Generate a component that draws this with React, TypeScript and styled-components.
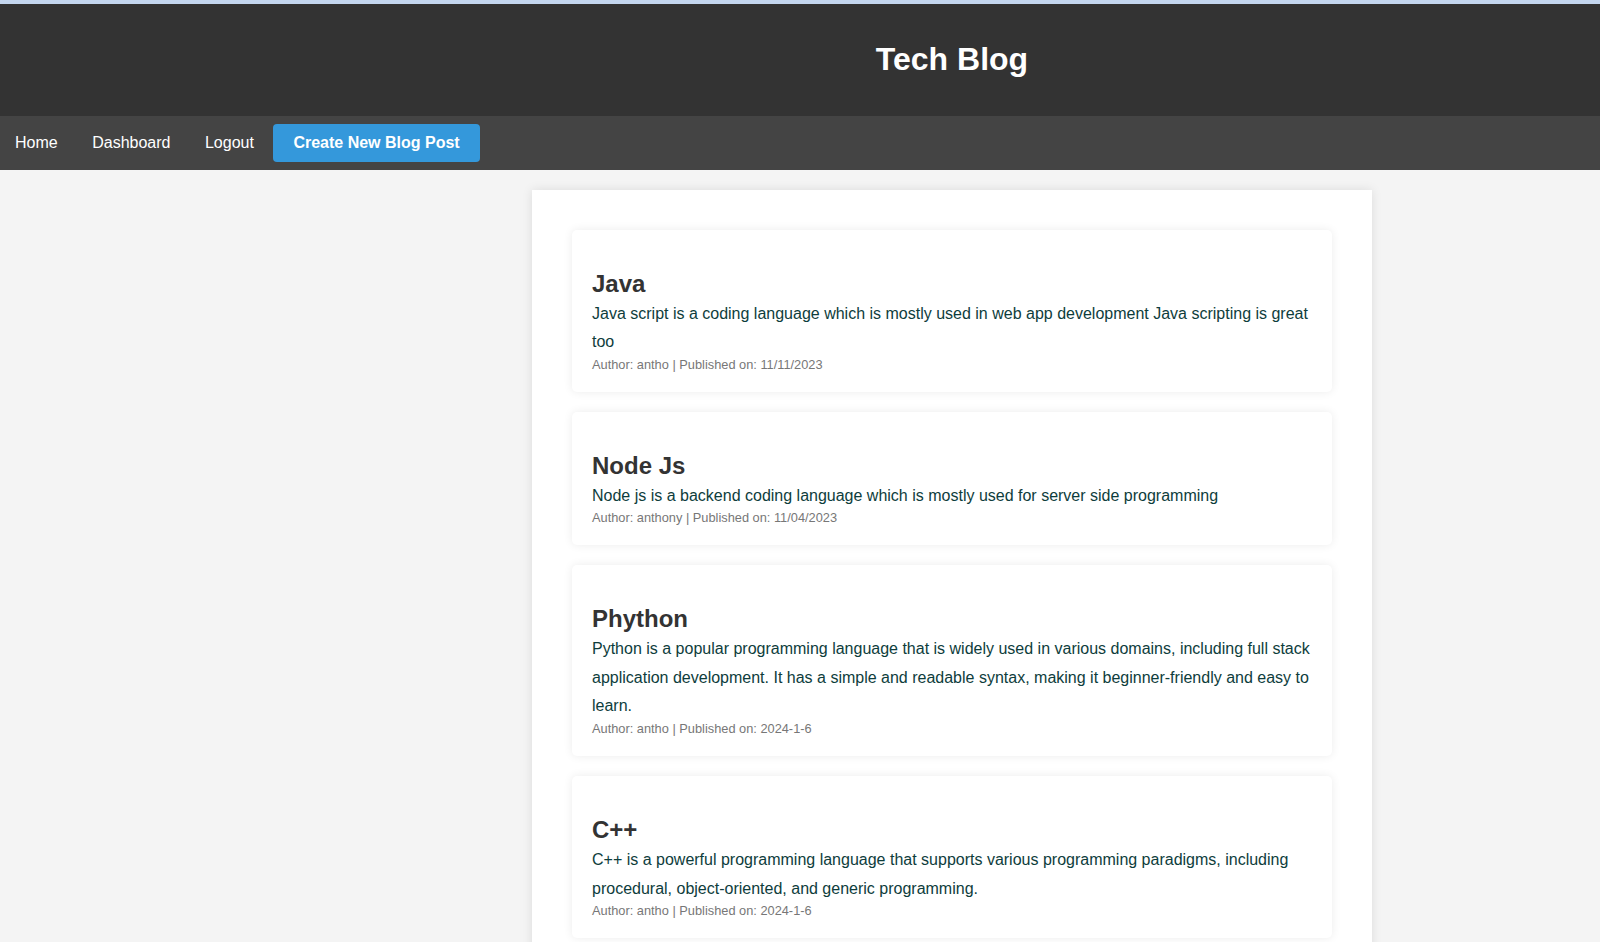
import React from "react";
import styled, { createGlobalStyle } from "styled-components";

const GlobalStyle = createGlobalStyle`
  html, body {
    margin: 0;
    padding: 0;
    background: #f4f4f4;
    font-family: "Liberation Sans", Arial, Helvetica, sans-serif;
  }
  * { box-sizing: border-box; }
`;

const Page = styled.div`
  min-height: 942px;
  border-top: 4px solid #c4d6ef;
`;

const Header = styled.header`
  background: #333333;
  height: 112px;
  display: flex;
  align-items: center;
  justify-content: center;
  padding-left: 304px;
  padding-bottom: 1px;
`;

const Title = styled.h1`
  margin: 0;
  color: #ffffff;
  font-size: 32px;
  font-weight: 700;
`;

const Nav = styled.nav`
  background: #444444;
  height: 54px;
  display: flex;
  align-items: center;
  gap: 4.5px;
`;

const NavLink = styled.a`
  color: #ffffff;
  font-size: 16px;
  text-decoration: none;
  padding: 0 15px;
  line-height: 18px;
`;

const CreateButton = styled.a`
  background: #3498db;
  color: #ffffff;
  font-size: 16px;
  font-weight: 700;
  text-decoration: none;
  padding: 10px 20px;
  line-height: 18px;
  border-radius: 4px;
`;

const MainArea = styled.main`
  display: flex;
  justify-content: center;
  padding-left: 304px;
  padding-top: 20px;
`;

const Container = styled.section`
  width: 840px;
  background: #ffffff;
  padding: 40px;
  box-shadow: 0 0 10px rgba(0, 0, 0, 0.1);
  display: flex;
  flex-direction: column;
  gap: 20px;
`;

const Card = styled.article`
  background: #ffffff;
  border-radius: 5px;
  padding: 20px;
  box-shadow: 0 0 10px rgba(0, 0, 0, 0.08);
`;

const PostTitle = styled.h2`
  margin: 20px 0 1.5px;
  font-size: 24px;
  font-weight: 700;
  color: #333333;
  line-height: 28px;
`;

const PostBody = styled.p`
  margin: 0;
  font-size: 16px;
  line-height: 1.8;
  color: #0e3d3c;
`;

const Meta = styled.p`
  margin: 0;
  font-size: 12.8px;
  color: #777777;
`;

const posts = [
  {
    title: "Java",
    body: "Java script is a coding language which is mostly used in web app development Java scripting is great too",
    author: "antho",
    date: "11/11/2023",
  },
  {
    title: "Node Js",
    body: "Node js is a backend coding language which is mostly used for server side programming",
    author: "anthony",
    date: "11/04/2023",
  },
  {
    title: "Phython",
    body: "Python is a popular programming language that is widely used in various domains, including full stack application development. It has a simple and readable syntax, making it beginner-friendly and easy to learn.",
    author: "antho",
    date: "2024-1-6",
  },
  {
    title: "C++",
    body: "C++ is a powerful programming language that supports various programming paradigms, including procedural, object-oriented, and generic programming.",
    author: "antho",
    date: "2024-1-6",
  },
];

export default function App() {
  return (
    <Page>
      <GlobalStyle />
      <Header>
        <Title>Tech Blog</Title>
      </Header>
      <Nav>
        <NavLink href="#">Home</NavLink>
        <NavLink href="#">Dashboard</NavLink>
        <NavLink href="#">Logout</NavLink>
        <CreateButton href="#">Create New Blog Post</CreateButton>
      </Nav>
      <MainArea>
        <Container>
          {posts.map((p) => (
            <Card key={p.title}>
              <PostTitle>{p.title}</PostTitle>
              <PostBody>{p.body}</PostBody>
              <Meta>
                Author: {p.author} | Published on: {p.date}
              </Meta>
            </Card>
          ))}
        </Container>
      </MainArea>
    </Page>
  );
}
